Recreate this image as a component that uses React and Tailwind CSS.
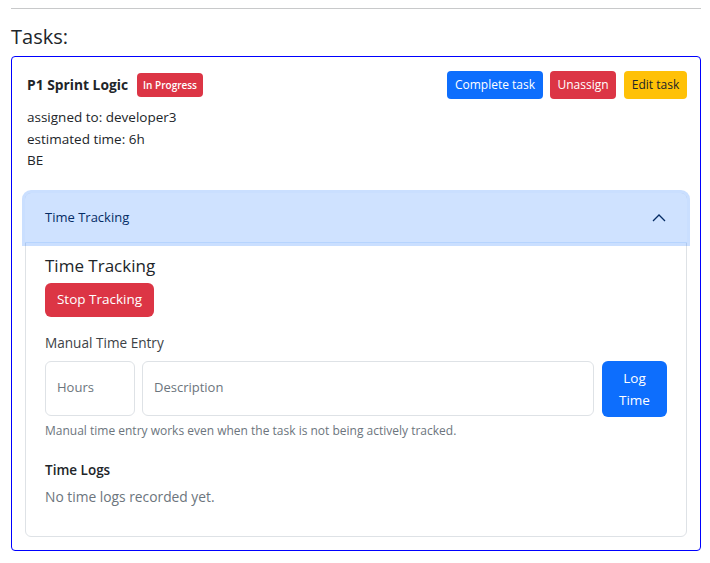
import React from "react";

const font = { fontFamily: '"Open Sans", "Noto Sans", sans-serif' };

export default function App() {
  return (
    <div className="pl-[11px] pr-[9px] pt-[8px] pb-[12px] bg-white text-[#212529]" style={font}>
      <div className="border-t border-[#c8c9ca]" />
      <h4 className="mt-[15px] text-[20px] leading-[25px] font-normal">Tasks:</h4>
      <div className="mt-[7px] border border-[#0000ff] rounded-[4px] px-[13px] pt-[14px] pb-[13px]">
        <div className="flex items-start justify-between">
          <div className="flex items-center h-[28px] pl-[2px] gap-[9px]">
            <span className="text-[13.8px] font-bold">P1 Sprint Logic</span>
            <span className="h-[24px] w-[66px] rounded-[4px] bg-[#dc3545] text-white text-[10px] font-semibold flex items-center justify-center">
              In Progress
            </span>
          </div>
          <div className="flex items-center gap-[7px]">
            <button className="h-[28px] w-[96px] rounded-[4px] bg-[#0d6efd] text-white text-[12px] leading-none">Complete task</button>
            <button className="h-[28px] w-[66px] rounded-[4px] bg-[#dc3545] text-white text-[12px] leading-none">Unassign</button>
            <button className="h-[28px] w-[63px] rounded-[4px] bg-[#ffc107] text-[#212529] text-[12px] leading-none ml-px">Edit task</button>
          </div>
        </div>
        <div className="mt-[8px] pl-[2px] text-[13.5px] leading-[21.5px]">
          <div>assigned to: developer3</div>
          <div>estimated time: 6h</div>
          <div>BE</div>
        </div>

        <div className="mt-[21px] border border-[#dee2e6] rounded-[6px]">
          <div className="h-[50px] -mx-px -mt-px flex items-center justify-between pl-[20px] pr-[21px] bg-[#cfe2ff] text-[#052c65] text-[13px] rounded-t-[6px] shadow-[0_0_0_3px_rgba(13,110,253,0.22),inset_0_-1px_0_#b6d4fe]">
            <span>Time Tracking</span>
            <svg width="14" height="9" viewBox="0 0 14 9" fill="none">
              <path d="M1 8 L7 2 L13 8" stroke="#052c65" strokeWidth="1.3" />
            </svg>
          </div>
          <div className="px-[19px] pt-[12px] pb-[29px]">
            <h5 className="text-[17px] leading-[22px] font-normal">Time Tracking</h5>
            <button className="mt-[6px] h-[34px] w-[109px] rounded-[6px] bg-[#dc3545] text-white text-[13.5px]">Stop Tracking</button>
            <div className="mt-[16px] text-[13.6px] leading-[20px] text-[#3d4246]">Manual Time Entry</div>
            <div className="mt-[8px] flex items-start">
              <div className="h-[55px] w-[90px] border border-[#dee2e6] rounded-[6px] flex items-center pl-[11px] text-[13px] text-[#6c757d]">Hours</div>
              <div className="ml-[7px] h-[55px] flex-1 border border-[#dee2e6] rounded-[6px] flex items-center pl-[11px] text-[13px] text-[#6c757d]">Description</div>
              <button className="ml-[8px] h-[56px] w-[65px] rounded-[6px] bg-[#0d6efd] text-white text-[13.5px] leading-[22px] flex flex-col items-center justify-center">
                <span>Log</span>
                <span>Time</span>
              </button>
            </div>
            <div className="mt-[5px] text-[12px] leading-[18px] text-[#6c757d]">Manual time entry works even when the task is not being actively tracked.</div>
            <div className="mt-[20px] text-[13.5px] leading-[20px] font-semibold">Time Logs</div>
            <div className="mt-[7px] text-[13.8px] leading-[20px] text-[#6c757d]">No time logs recorded yet.</div>
          </div>
        </div>
      </div>
    </div>
  );
}
